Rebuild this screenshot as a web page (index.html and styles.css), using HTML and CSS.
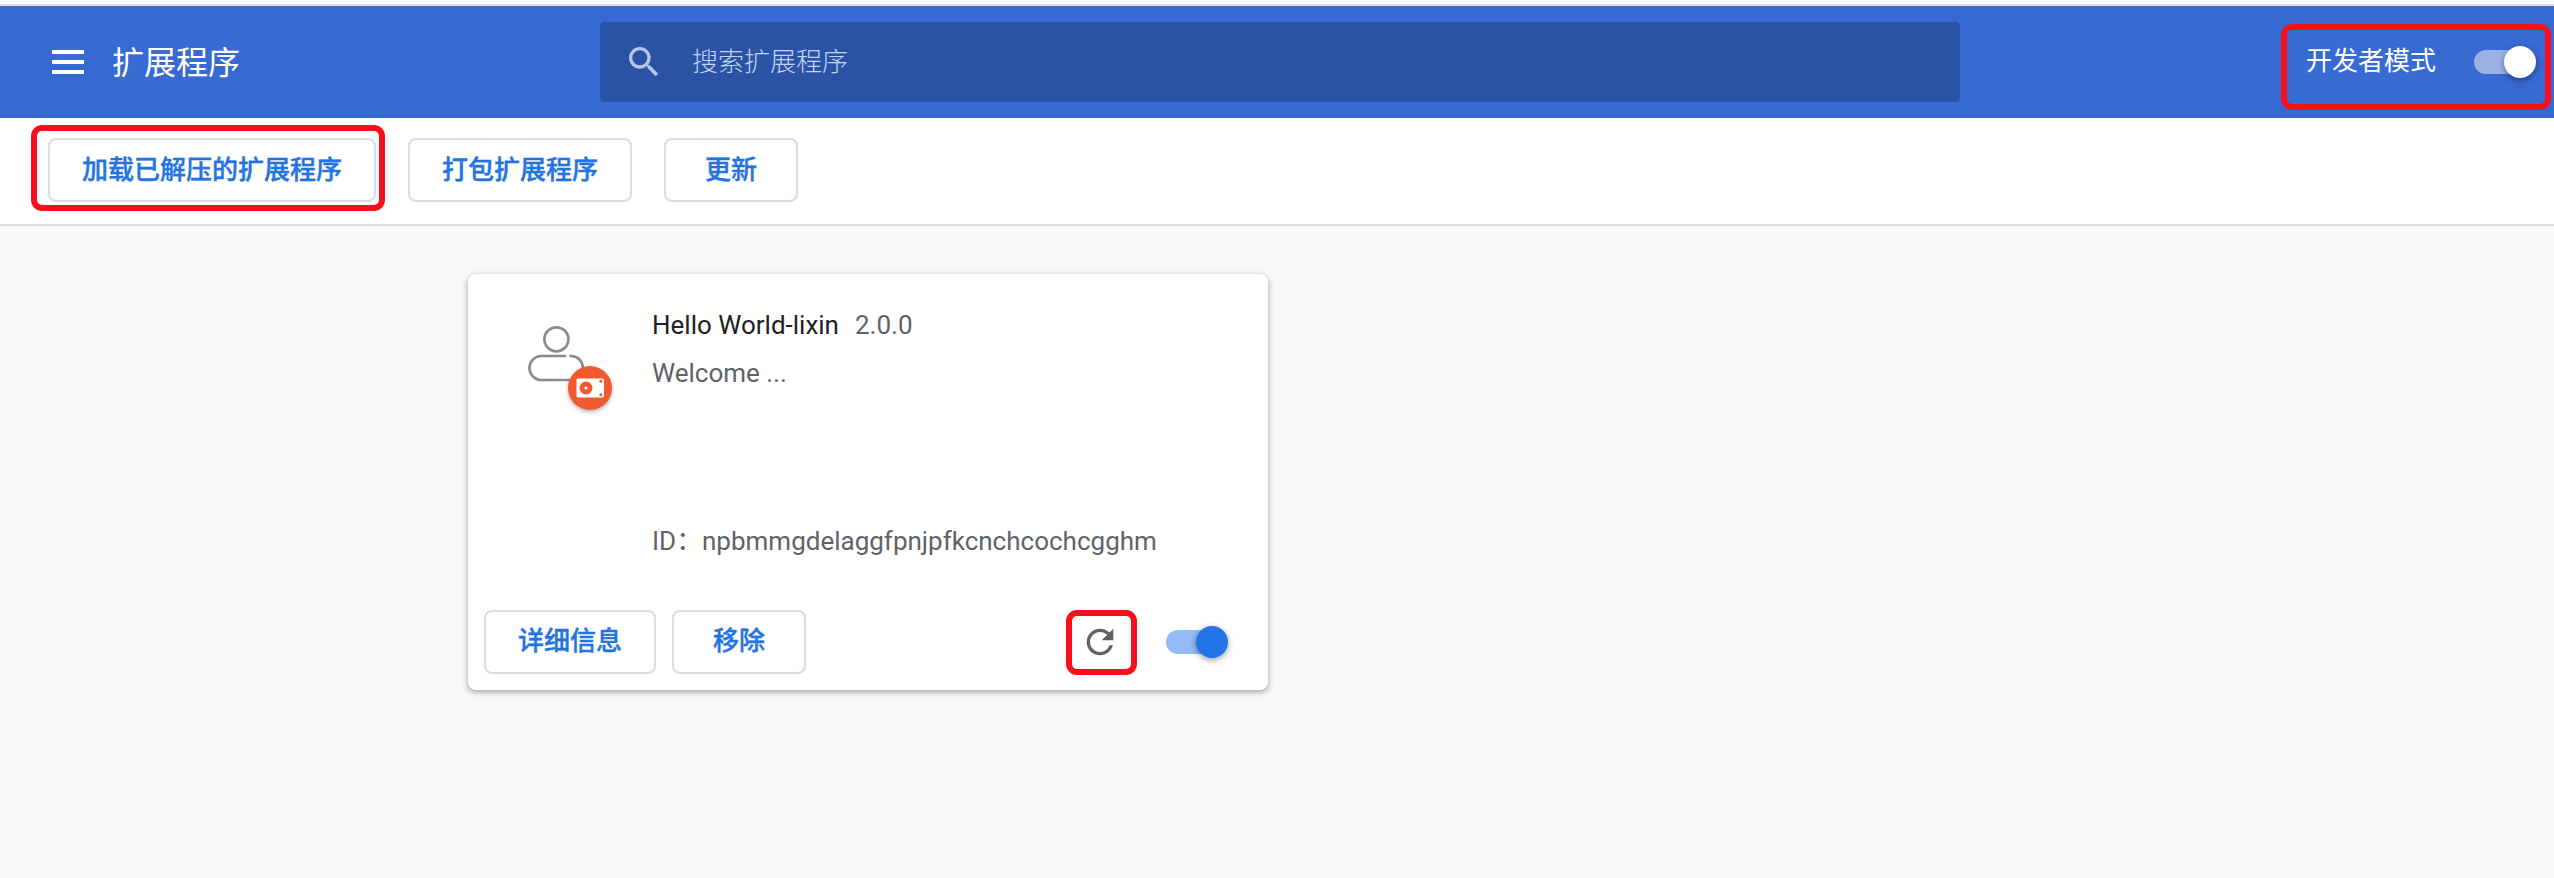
FILE: index.html
```html
<!DOCTYPE html>
<html lang="zh-CN">
<head>
<meta charset="utf-8">
<title>扩展程序</title>
<link rel="stylesheet" href="styles.css">
</head>
<body>
<header class="header">
  <div class="header-left">
    <svg class="menu" viewBox="0 0 32 24"><path d="M0 0h32v4H0zM0 10h32v4H0zM0 20h32v4H0z" fill="#fff"/></svg>
    <h1 class="title">扩展程序</h1>
  </div>
  <div class="search">
    <svg class="search-icon" viewBox="0 0 24 24"><path fill="currentColor" d="M15.5 14h-.79l-.28-.27A6.471 6.471 0 0 0 16 9.5 6.5 6.5 0 1 0 9.5 16c1.61 0 3.09-.59 4.23-1.57l.27.28v.79l5 4.99L20.49 19l-4.99-5zm-6 0C7.01 14 5 11.99 5 9.5S7.01 5 9.5 5 14 7.01 14 9.5 11.99 14 9.5 14z"/></svg>
    <span class="placeholder">搜索扩展程序</span>
  </div>
  <div class="dev-mode">
    <span class="dev-label">开发者模式</span>
    <span class="toggle toggle-light"><span class="knob"></span></span>
    <span class="mark mark-dev"></span>
  </div>
</header>
<nav class="toolbar">
  <div class="marked"><button class="button">加载已解压的扩展程序</button><span class="mark mark-load"></span></div>
  <button class="button">打包扩展程序</button>
  <button class="button">更新</button>
</nav>
<main class="content">
  <article class="card">
    <div class="card-main">
      <svg class="avatar" viewBox="0 0 110 110">
        <g fill="none" stroke="#8c8c8c" stroke-width="2.7" stroke-linecap="round">
          <circle cx="46.4" cy="29.3" r="12"/>
          <path d="M55 46H31.500a12 12 0 0 0 0 24H60M60.500 46Q72 46.500 73 58"/>
        </g>
        <circle class="badge" cx="80" cy="78" r="22" fill="#f15a31"/>
        <rect x="66.500" y="68.500" width="27.500" height="19" rx="1.800" fill="#fff"/>
        <circle cx="76" cy="78" r="6.500" fill="#f15a31"/>
        <circle cx="76" cy="78" r="1.500" fill="#fff"/>
        <circle cx="90.800" cy="71.300" r="1.500" fill="#f15a31"/>
        <circle cx="90.800" cy="84.700" r="1.500" fill="#f15a31"/>
      </svg>
      <div class="info">
        <div class="name-row"><span class="name">Hello World-lixin</span><span>2.0.0</span></div>
        <div class="description">Welcome ...</div>
        <div class="id-row"><span class="id-label">ID：</span><span>npbmmgdelaggfpnjpfkcnchcochcgghm</span></div>
      </div>
    </div>
    <div class="card-actions">
      <button class="button">详细信息</button>
      <button class="button">移除</button>
      <div class="reload">
        <svg class="reload-icon" viewBox="0 0 24 24"><path fill="#5f6368" d="M17.650 6.350A7.958 7.958 0 0 0 12 4c-4.420 0-7.990 3.580-7.990 8s3.570 8 7.990 8c3.730 0 6.840-2.550 7.730-6h-2.080A5.990 5.990 0 0 1 12 18c-3.310 0-6-2.690-6-6s2.690-6 6-6c1.660 0 3.140.69 4.220 1.780L13 11h7V4l-2.350 2.350z"/></svg>
        <span class="mark mark-reload"></span>
      </div>
      <span class="toggle"><span class="knob"></span></span>
    </div>
  </article>
</main>
</body>
</html>
```
FILE: styles.css
```css
* { box-sizing: border-box; }
body {
  margin: 0;
  height: 878px;
  display: flex;
  flex-direction: column;
  overflow: hidden;
  background: #f8f9fb;
  border-top: 4px solid #fff;
  font-family: Roboto, "Noto Sans CJK SC", sans-serif;
  font-size: 26px;
  color: #5f6368;
}
.header {
  height: 114px;
  flex: none;
  display: grid;
  grid-template-columns: 600px 1360px 1fr;
  align-items: center;
  background: #376ad3;
  border-top: 2px solid #dadce0;
  color: #fff;
}
.header-left { display: flex; align-items: center; gap: 28px; padding-left: 52px; }
.menu { width: 32px; height: 24px; }
.title { margin: 2px 0 0; font-size: 32px; line-height: 48px; font-weight: 400; }
.search {
  height: 80px;
  display: flex;
  align-items: center;
  gap: 28px;
  padding-left: 24px;
  border-radius: 4px;
  background: #2a53a5;
  color: #b4c7ef;
}
.search-icon { width: 40px; height: 40px; }
.placeholder { line-height: 40px; margin-top: -1px; font-weight: 300; color: #c4d3f4; }
.dev-mode {
  position: relative;
  display: flex;
  align-items: center;
  justify-content: flex-end;
  gap: 38px;
  padding-right: 18px;
}
.dev-label { line-height: 40px; margin-top: -2px; }
.toggle {
  position: relative;
  width: 62px;
  height: 32px;
  display: flex;
  align-items: center;
  justify-content: flex-end;
}
.toggle::before {
  content: "";
  position: absolute;
  left: 0;
  top: 4px;
  width: 56px;
  height: 24px;
  border-radius: 12px;
  background: #93bbf5;
}
.knob {
  position: relative;
  width: 32px;
  height: 32px;
  border-radius: 50%;
  background: #2374e6;
  box-shadow: 0 2px 6px rgba(0, 0, 0, .4);
}
.toggle-light::before { background: #9bb0e4; }
.toggle-light .knob { background: #fff; }
.toolbar {
  height: 108px;
  flex: none;
  display: flex;
  align-items: flex-start;
  gap: 32px;
  padding: 20px 48px;
  background: #fff;
  border-bottom: 2px solid #dcdddf;
}
.button {
  height: 64px;
  min-width: 134px;
  padding: 0 32px 1px;
  border: 2px solid #dadce0;
  border-radius: 8px;
  background: #fff;
  color: #2374e0;
  font: 500 26px/40px Roboto, "Noto Sans CJK SC", sans-serif;
  -webkit-text-stroke: .4px currentColor;
  white-space: nowrap;
}
.marked { position: relative; display: flex; }
.mark {
  position: absolute;
  border: 6px solid #fb0d1b;
  border-radius: 11px;
}
.mark-load { left: -17px; top: -13px; width: 354px; height: 86px; }
.mark-dev { right: 3px; top: -19px; width: 270px; height: 86px; }
.mark-reload { inset: 0; }
.content { padding: 48px 0 0 468px; }
.card {
  width: 800px;
  height: 416px;
  display: flex;
  flex-direction: column;
  justify-content: space-between;
  border-radius: 8px;
  background: #fff;
  box-shadow: 0 2px 4px rgba(60, 64, 67, .3), 0 2px 6px 2px rgba(60, 64, 67, .15);
}
.card-main { display: flex; padding: 36px 40px 0 42px; gap: 32px; }
.avatar { width: 110px; height: 110px; flex: none; }
.badge { filter: drop-shadow(0 2px 2px rgba(0, 0, 0, .3)); }
.info { display: flex; flex-direction: column; line-height: 32px; margin-top: -1px; }
.name-row { display: flex; gap: 16px; }
.name { color: #202124; }
.description { margin-top: 16px; }
.id-row { display: flex; margin-top: 136px; height: 32px; }
.id-label { width: 50px; white-space: nowrap; }
.card-actions { display: flex; align-items: center; gap: 16px; padding: 0 40px 16px 16px; }
.reload {
  position: relative;
  width: 71px;
  height: 65px;
  display: flex;
  align-items: center;
  justify-content: center;
  margin: 1px 13px -1px auto;
}
.reload-icon { width: 40px; height: 40px; margin: -1px 0 0 -3px; }
```
